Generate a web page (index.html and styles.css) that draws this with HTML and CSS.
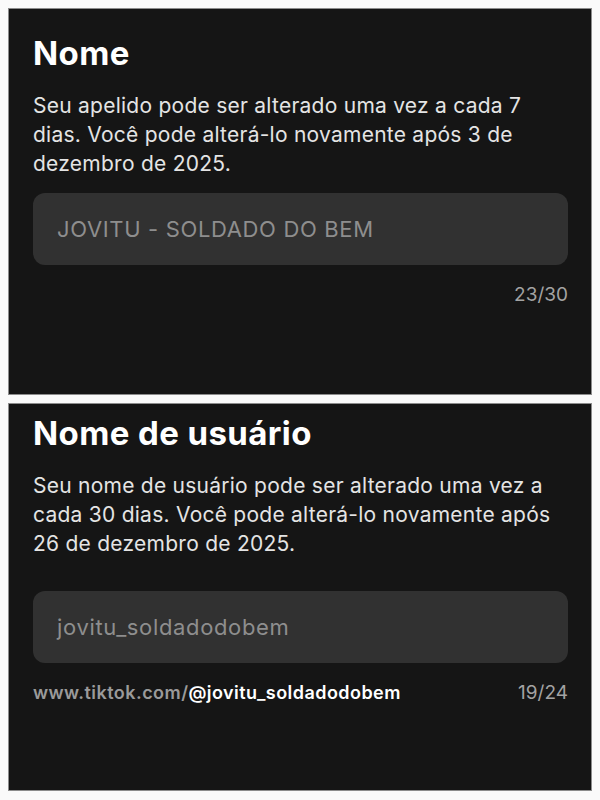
FILE: index.html
```html
<!DOCTYPE html>
<html lang="pt-BR">
<head>
  <meta charset="UTF-8">
  <title>Editar perfil</title>
  <link rel="stylesheet" href="styles.css">
</head>

<body>

  <section class="panel">
    <h2 class="title">Nome</h2>
    <p class="desc">Seu apelido pode ser alterado uma vez a cada 7 dias. Você pode alterá-lo novamente após 3 de dezembro de 2025.</p>
    <div class="field">JOVITU - SOLDADO DO BEM</div>
    <div class="meta">
      <span class="count">23/30</span>
    </div>
  </section>

  <section class="panel panel-user">
    <h2 class="title">Nome de usuário</h2>
    <p class="desc">Seu nome de usuário pode ser alterado uma vez a cada 30 dias. Você pode alterá-lo novamente após 26 de dezembro de 2025.</p>
    <div class="field">jovitu_soldadodobem</div>
    <div class="meta">
      <span class="link">www.tiktok.com/<b>@jovitu_soldadodobem</b></span>
      <span class="count">19/24</span>
    </div>
  </section>

</body>
</html>
```

FILE: styles.css
```css
body {
  font-family: Inter, "Noto Sans", sans-serif;
  background: #fafafa;
  margin: 0;
  padding: 8px;
  display: flex;
  flex-direction: column;
  gap: 8px;
}

.panel {
  background: #151515;
  border: 1px solid #8c8c8c;
  padding: 25px 23px 0 24px;
  box-sizing: border-box;
  height: 387px;
}

.panel-user {
  padding-top: 10px;
  height: 388px;
}

.title {
  margin: 0;
  color: #fff;
  font-size: 33px;
  font-weight: 700;
  line-height: 38px;
  letter-spacing: 0.4px;
}

.desc {
  margin: 19px 0 0;
  color: #e4e4e4;
  font-size: 21px;
  line-height: 29px;
  letter-spacing: 0.25px;
}

.field {
  margin-top: 15px;
  height: 72px;
  display: flex;
  align-items: center;
  padding: 0 24px;
  background: #313131;
  border-radius: 12px;
  color: #8e8e8e;
  font-size: 22px;
  letter-spacing: 0.65px;
}

.panel-user .field {
  margin-top: 33px;
}

.meta {
  display: flex;
  justify-content: space-between;
  align-items: baseline;
  margin-top: 18px;
  line-height: 24px;
}

.count {
  margin-left: auto;
  color: #a3a3a3;
  font-size: 19px;
}

.link {
  color: #9a9a9a;
  font-size: 18px;
  font-weight: 600;
  letter-spacing: 0.45px;
}

.link b {
  color: #fff;
  font-weight: 600;
}
```
